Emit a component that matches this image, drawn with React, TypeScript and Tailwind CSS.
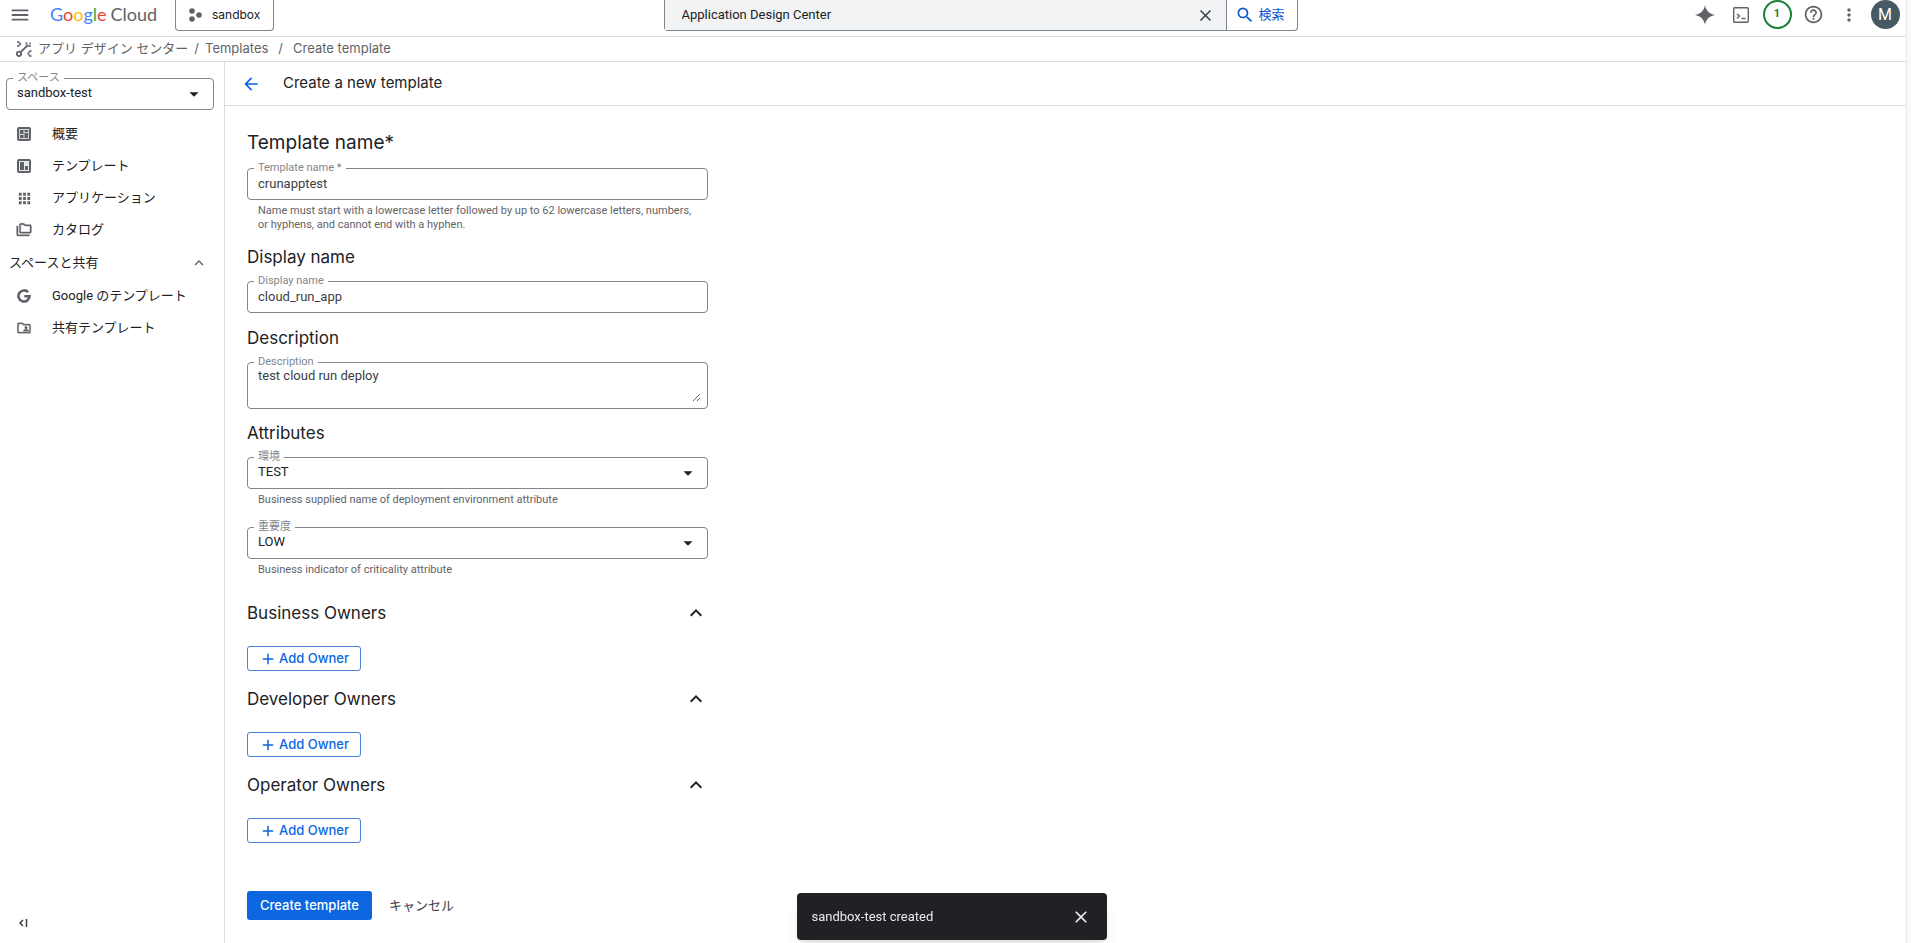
import { useState } from "react";
import type { ReactNode } from "react";
import {
  MdAdd,
  MdApps,
  MdArrowBack,
  MdArrowDropDown,
  MdClose,
  MdExpandLess,
  MdHelpOutline,
  MdMenu,
  MdMoreVert,
  MdSearch,
} from "react-icons/md";

type FieldProps = {
  id: string;
  label: string;
  hint?: string;
  children: ReactNode;
};

// Outlined box with the label sitting on its top border
const Field = ({ id, label, hint, children }: FieldProps) => (
  <div>
    <div className="relative flex rounded border border-[#80868b] bg-white">
      <label
        htmlFor={id}
        className="absolute -top-2 left-[6px] bg-white px-1 text-[11px] leading-[14px] text-[#80868b]"
      >
        {label}
      </label>
      {children}
    </div>
    {hint && (
      <p className="mt-1 pr-2 pl-[11px] text-[11px] leading-[14px] text-[#5f6368]">{hint}</p>
    )}
  </div>
);

type SelectProps = {
  id: string;
  label: string;
  hint?: string;
  options: string[];
};

const SelectField = ({ id, label, hint, options }: SelectProps) => (
  <Field id={id} label={label} hint={hint}>
    <select
      id={id}
      className="h-[30px] w-full appearance-none bg-transparent pb-[2px] pl-[10px] text-[13px] text-[#202124] outline-none"
    >
      {options.map((option) => (
        <option key={option}>{option}</option>
      ))}
    </select>
    <MdArrowDropDown
      size={22}
      className="pointer-events-none absolute top-1 right-2 text-[#202124]"
    />
  </Field>
);

const OverviewIcon = () => (
  <svg viewBox="0 0 14 14" className="size-[14px]" fill="none" stroke="currentColor">
    <rect x="1" y="1" width="12" height="12" rx="1" strokeWidth="2" fill="#d5d7d9" />
    <path d="M3 3h3.500v4H3zM3 8h3.500v3H3zM7.500 3H11v2H7.500zM7.500 6H11v5H7.500z" fill="currentColor" stroke="none" />
  </svg>
);

const TemplateIcon = () => (
  <svg viewBox="0 0 14 14" className="size-[14px]" fill="none" stroke="currentColor">
    <rect x="1" y="1" width="12" height="12" rx="1" strokeWidth="2" fill="#e8eaed" />
    <path d="M3 3h4v8H3zM8 7h3v4H8z" fill="currentColor" stroke="none" />
  </svg>
);

const CatalogIcon = () => (
  <svg viewBox="0 0 24 24" className="size-4" fill="currentColor" stroke="currentColor" strokeWidth=".6">
    <path d="M3 19h17v2H3c-1.100 0-2-.9-2-2V6h2v13zM23 6v9c0 1.100-.9 2-2 2H7c-1.100 0-2-.9-2-2l.01-11c0-1.100.89-2 1.990-2h5l2 2h7c1.100 0 2 .9 2 2zM7 15h14V6h-7.830l-2-2H7v11z" />
  </svg>
);

const GoogleIcon = () => (
  <svg viewBox="0 0 24 24" className="size-[14px]" fill="none" stroke="currentColor" strokeWidth="4.500">
    <path d="M19 5.500A9.500 9.500 0 1 0 21.500 12.500H12.500" />
  </svg>
);

const SharedIcon = () => (
  <svg viewBox="0 0 24 24" className="size-4" fill="currentColor" stroke="currentColor" strokeWidth=".4">
    <path d="M20 6h-8l-2-2H4c-1.100 0-2 .9-2 2v12c0 1.100.9 2 2 2h16c1.100 0 2-.9 2-2V8c0-1.100-.9-2-2-2zm0 12H4V6h5.170l2 2H20v10z" />
    <circle cx="15" cy="11.500" r="2" />
    <path d="M11 17v-1c0-1.300 2.700-2 4-2s4 .7 4 2v1z" />
  </svg>
);

const DesignCenterIcon = () => (
  <svg viewBox="0 0 16 16" className="size-4" fill="none" stroke="#80868b" strokeWidth="1.800">
    <path d="M1 1h1.500L4.500 3 2.500 5H1M10.500 1v3l1 1h3.500M15 2l-2 1M15.500 10h-1.500l-2 2.500 2 2.500h1.500" />
    <path d="M4.600 11.200L11 5" stroke="#5f6368" />
    <circle cx="3" cy="12.800" r="2.200" stroke="#5f6368" />
  </svg>
);

const CollapseIcon = () => (
  <svg viewBox="0 0 10 10" className="size-[10px]" fill="none" stroke="#3c4043" strokeWidth="1.500">
    <path d="M5 2L2 5l3 3M8.500 1v8" />
  </svg>
);

const topLinks = [
  { label: "概要", icon: <OverviewIcon /> },
  { label: "テンプレート", icon: <TemplateIcon /> },
  { label: "アプリケーション", icon: <MdApps size={17} /> },
  { label: "カタログ", icon: <CatalogIcon /> },
];

const sharedLinks = [
  { label: "Google のテンプレート", icon: <GoogleIcon /> },
  { label: "共有テンプレート", icon: <SharedIcon /> },
];

const NavLinks = ({ links }: { links: typeof topLinks }) => (
  <ul>
    {links.map(({ label, icon }) => (
      <li key={label}>
        <a href="#" className="flex h-8 items-center text-[13px] text-[#202124]">
          <span className="flex w-12 justify-center text-[#5f6368]">{icon}</span>
          <span className="pl-1">{label}</span>
        </a>
      </li>
    ))}
  </ul>
);

const Header = () => {
  const [query, setQuery] = useState("Application Design Center");

  return (
    <header className="flex h-[37px] items-start justify-between border-b border-[#dadce0] text-[#5f6368]">
      <div className="flex items-start">
        <button type="button" aria-label="Menu" className="flex h-[29px] w-10 items-center justify-center">
          <MdMenu size={22} />
        </button>
        <a
          href="#"
          className="flex h-[29px] w-[135px] items-center gap-1 pl-[10px] font-[Lato,sans-serif] text-[18px]"
        >
          <span>
            <span className="text-[#4285f4]">G</span>
            <span className="text-[#ea4335]">o</span>
            <span className="text-[#fbbc04]">o</span>
            <span className="text-[#4285f4]">g</span>
            <span className="text-[#34a853]">l</span>
            <span className="text-[#ea4335]">e</span>
          </span>
          <span>Cloud</span>
        </a>
        <button
          type="button"
          className="flex h-[31px] w-[99px] items-center gap-[10px] rounded-b border border-t-0 border-[#80868b] pl-3 font-[Inter,sans-serif] text-[12px] text-[#202124]"
        >
          <svg viewBox="0 0 14 14" className="size-[14px]" fill="#5f6368">
            <circle cx="4" cy="3" r="2.800" />
            <circle cx="4" cy="11" r="2.800" />
            <circle cx="11" cy="7" r="2.800" />
          </svg>
          sandbox
        </button>
      </div>

      <form
        className="flex h-[31px] w-[634px] rounded-b border border-t-0 border-[#80868b]"
        onSubmit={(e) => e.preventDefault()}
      >
        <div className="flex flex-1 items-center bg-[#f1f3f4]">
          <input
            type="text"
            aria-label="Search"
            value={query}
            onChange={(e) => setQuery(e.target.value)}
            className="h-full flex-1 bg-transparent pb-[2px] pl-[17px] text-[13px] text-[#202124] outline-none"
          />
          <button type="button" aria-label="Clear" className="px-[11px] text-[#3c4043]" onClick={() => setQuery("")}>
            <MdClose size={19} />
          </button>
        </div>
        <button
          type="submit"
          className="flex w-[71px] items-center gap-1 border-l border-[#80868b] pl-2 text-[13px] text-[#0b57d0]"
        >
          <MdSearch size={20} />
          検索
        </button>
      </form>

      <div className="flex h-[29px] items-center pr-[3px]">
        <button type="button" aria-label="Gemini" className="flex w-9 justify-center">
          <svg viewBox="0 0 20 20" className="size-5" fill="currentColor">
            <path d="M10 0C10.800 5.500 14.500 9.200 20 10 14.500 10.800 10.800 14.500 10 20 9.200 14.500 5.500 10.800 0 10 5.500 9.200 9.200 5.500 10 0z" />
          </svg>
        </button>
        <button type="button" aria-label="Cloud Shell" className="flex w-9 justify-center">
          <svg viewBox="0 0 16 16" className="size-4" fill="none" stroke="currentColor" strokeWidth="1.400">
            <rect x=".7" y=".7" width="14.600" height="14.600" rx="1" />
            <path d="M4 7l2.500 2L4 11.500M8.500 11.500h4" />
          </svg>
        </button>
        <button type="button" aria-label="Notifications" className="flex w-9 justify-center">
          <span className="flex size-[29px] items-center justify-center rounded-full border-2 border-[#188038] text-[11px] font-bold text-[#188038]">
            1
          </span>
        </button>
        <button type="button" aria-label="Help" className="flex w-9 justify-center">
          <MdHelpOutline size={21} />
        </button>
        <button type="button" aria-label="More" className="flex w-9 justify-center">
          <MdMoreVert size={20} />
        </button>
        <button type="button" aria-label="Account" className="flex w-9 justify-center">
          <span className="flex size-[29px] items-center justify-center rounded-full bg-[#455a64] text-base text-white">
            M
          </span>
        </button>
      </div>
    </header>
  );
};

const Breadcrumb = () => (
  <nav
    aria-label="Breadcrumb"
    className="flex h-[25px] items-center border-b border-[#dadce0] pl-4 font-[Inter,'Noto_Sans_CJK_JP',sans-serif] text-[13px] text-[#5f6368]"
  >
    <DesignCenterIcon />
    <a href="#" className="pl-[6px]">
      アプリ デザイン センター
    </a>
    <span className="px-[6px]">/</span>
    <a href="#">Templates</a>
    <span className="px-[10px]">/</span>
    <a href="#">Create template</a>
  </nav>
);

const Sidebar = () => (
  <aside className="flex w-[225px] shrink-0 flex-col border-r border-[#dadce0]">
    <div className="px-[6px] pt-4 pr-[10px] pb-2">
      <SelectField id="space" label="スペース" options={["sandbox-test"]} />
    </div>
    <NavLinks links={topLinks} />
    <button
      type="button"
      className="flex h-[34px] items-center justify-between pr-4 pl-[9px] text-[13px] text-[#202124]"
    >
      スペースと共有
      <MdExpandLess size={18} className="text-[#5f6368]" />
    </button>
    <NavLinks links={sharedLinks} />
    <button type="button" aria-label="Collapse" className="mt-auto mb-4 ml-[18px] w-fit">
      <CollapseIcon />
    </button>
  </aside>
);

const Heading = ({ children }: { children: ReactNode }) => (
  <h2 className="mb-3 font-[Inter,sans-serif] text-[17px] leading-6 text-[#202124]">{children}</h2>
);

const OwnerSection = ({ title }: { title: string }) => (
  <section className="mb-4">
    <button
      type="button"
      className="flex w-full items-center justify-between font-[Inter,sans-serif] text-[17px] leading-6 text-[#202124]"
    >
      {title}
      <MdExpandLess size={24} />
    </button>
    <button
      type="button"
      className="mt-[21px] flex h-[25px] w-[114px] items-center justify-center gap-[2px] rounded-[3px] border border-[#4a7fd6] font-[Inter,sans-serif] text-[13px] font-medium text-[#0b66e0]"
    >
      <MdAdd size={18} />
      Add Owner
    </button>
  </section>
);

const TemplateForm = () => {
  const [name, setName] = useState("crunapptest");
  const [displayName, setDisplayName] = useState("cloud_run_app");
  const [description, setDescription] = useState("test cloud run deploy");

  return (
    <form className="ml-[22px] w-[461px] pt-[25px] pb-6" onSubmit={(e) => e.preventDefault()}>
      <h2 className="mb-[13px] font-[Inter,sans-serif] text-[19px] leading-6 text-[#202124]">Template name*</h2>
      <Field
        id="name"
        label="Template name *"
        hint="Name must start with a lowercase letter followed by up to 62 lowercase letters, numbers, or hyphens, and cannot end with a hyphen."
      >
        <input
          id="name"
          type="text"
          value={name}
          onChange={(e) => setName(e.target.value)}
          className="h-[30px] w-full bg-transparent pb-[2px] pl-[10px] text-[13px] text-[#3c4043] outline-none"
        />
      </Field>

      <div className="mt-[13px]">
        <Heading>Display name</Heading>
        <Field id="display-name" label="Display name">
          <input
            id="display-name"
            type="text"
            value={displayName}
            onChange={(e) => setDisplayName(e.target.value)}
            className="h-[30px] w-full bg-transparent pb-[2px] pl-[10px] text-[13px] text-[#3c4043] outline-none"
          />
        </Field>
      </div>

      <div className="mt-[13px]">
        <Heading>Description</Heading>
        <Field id="description" label="Description">
          <textarea
            id="description"
            value={description}
            onChange={(e) => setDescription(e.target.value)}
            className="mt-[3px] mr-[6px] mb-[6px] h-9 w-full resize-y bg-transparent pl-[10px] text-[13px] leading-5 text-[#3c4043] outline-none"
          />
        </Field>
      </div>

      <div className="mt-3">
        <Heading>Attributes</Heading>
        <SelectField
          id="environment"
          label="環境"
          hint="Business supplied name of deployment environment attribute"
          options={["TEST"]}
        />
        <div className="mt-5">
          <SelectField
            id="criticality"
            label="重要度"
            hint="Business indicator of criticality attribute"
            options={["LOW"]}
          />
        </div>
      </div>

      <div className="mt-6">
        <OwnerSection title="Business Owners" />
        <OwnerSection title="Developer Owners" />
        <OwnerSection title="Operator Owners" />
      </div>

      <div className="mt-12 flex items-center">
        <button
          type="submit"
          className="h-[29px] w-[125px] rounded-[3px] bg-[#0b66e0] font-[Inter,sans-serif] text-[13px] font-medium text-white"
        >
          Create template
        </button>
        <button type="button" className="ml-[17px] text-[13px] text-[#3c4043]">
          キャンセル
        </button>
      </div>
    </form>
  );
};

const Toast = () => (
  <div className="pointer-events-none fixed inset-x-0 bottom-[3px] flex justify-center pr-2">
    <div
      role="status"
      className="pointer-events-auto flex h-[47px] w-[310px] items-center justify-between rounded bg-[#202124] pr-4 pl-[15px] text-[13px] text-[#e8eaed] shadow-lg"
    >
      sandbox-test created
      <button type="button" aria-label="Dismiss">
        <MdClose size={20} />
      </button>
    </div>
  </div>
);

const App = () => (
  <div className="flex min-h-screen bg-[#f8f9fa] pr-1 font-[Roboto,'Noto_Sans_CJK_JP',sans-serif]">
    <div className="flex flex-1 flex-col border-r border-[#e8eaed] bg-white">
      <Header />
      <Breadcrumb />
      <div className="flex flex-1">
        <Sidebar />
        <main className="flex-1">
          <div className="flex h-11 items-center border-b border-[#dadce0] pl-4">
            <a href="#" aria-label="Back" className="text-[#0b66e0]">
              <MdArrowBack size={20} />
            </a>
            <h1 className="pl-[22px] font-[Inter,sans-serif] text-[15px] text-[#202124]">Create a new template</h1>
          </div>
          <TemplateForm />
        </main>
      </div>
    </div>
    <Toast />
  </div>
);

export default App;
